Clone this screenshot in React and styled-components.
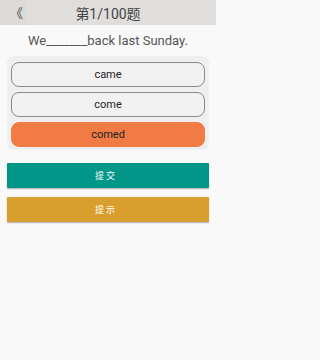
import React from 'react';
import styled, { createGlobalStyle } from 'styled-components';

const GlobalStyle = createGlobalStyle`
  html, body {
    margin: 0;
    padding: 0;
    background: #f9f9f9;
  }
  body {
    font-family: Roboto, "Noto Sans CJK SC", "Liberation Sans", sans-serif;
  }
`;

const Page = styled.div`
  width: 216px;
  height: 360px;
  background: #f9f9f9;
  display: flex;
  flex-direction: column;
`;

const TopBar = styled.header`
  height: 25px;
  display: flex;
  align-items: center;
  background: #e0dedc;
`;

const BackButton = styled.button`
  width: 27px;
  height: 25px;
  border: none;
  padding: 0 0 0 10px;
  background: #dcdad8;
  color: #4a4a4a;
  font-size: 13px;
  font-family: "Noto Sans CJK SC", sans-serif;
  text-align: left;
  line-height: 25px;
`;

const Title = styled.h1`
  flex: 1;
  margin: 0 27px 0 0;
  text-align: center;
  font-size: 14px;
  font-weight: 400;
  color: #444;
  font-family: Roboto, "Noto Sans CJK SC", sans-serif;
`;

const Question = styled.p`
  margin: 0;
  height: 31px;
  line-height: 31px;
  text-align: center;
  font-size: 13px;
  color: #555;
  font-family: Roboto, "Liberation Sans", sans-serif;
`;

const Card = styled.div`
  margin: 0 7px;
  padding: 6px 4px 3px;
  background: #efefef;
  border-radius: 6px;
  display: flex;
  flex-direction: column;
  gap: 5px;
`;

const Option = styled.div`
  height: 25px;
  box-sizing: border-box;
  border-radius: 8px;
  border: 1px solid ${({ $picked }) => ($picked ? '#f07b45' : '#8a8a8a')};
  background: ${({ $picked }) => ($picked ? '#f07b45' : '#f1f1f1')};
  display: flex;
  align-items: center;
  justify-content: center;
  font-size: 11px;
  color: #222;
  font-family: Roboto, "Liberation Sans", sans-serif;
`;

const ActionButton = styled.button`
  margin: ${({ $top }) => $top}px 7px 0;
  height: 25px;
  border: none;
  border-radius: 1px;
  background: ${({ $bg }) => $bg};
  color: #fff;
  font-size: 9px;
  letter-spacing: 2px;
  padding-left: 2px;
  font-family: "Noto Sans CJK SC", sans-serif;
  box-shadow: 0 1px 1.5px rgba(0, 0, 0, 0.3);
`;

const options = ['came', 'come', 'comed'];

export default function App() {
  const picked = 2;
  return (
    <Page>
      <GlobalStyle />
      <TopBar>
        <BackButton>《</BackButton>
        <Title>第1/100题</Title>
      </TopBar>
      <Question>We_______back last Sunday.</Question>
      <Card>
        {options.map((o, i) => (
          <Option key={o} $picked={i === picked}>{o}</Option>
        ))}
      </Card>
      <ActionButton $top={13} $bg="#009688">提交</ActionButton>
      <ActionButton $top={9} $bg="#d99f2e">提示</ActionButton>
    </Page>
  );
}
